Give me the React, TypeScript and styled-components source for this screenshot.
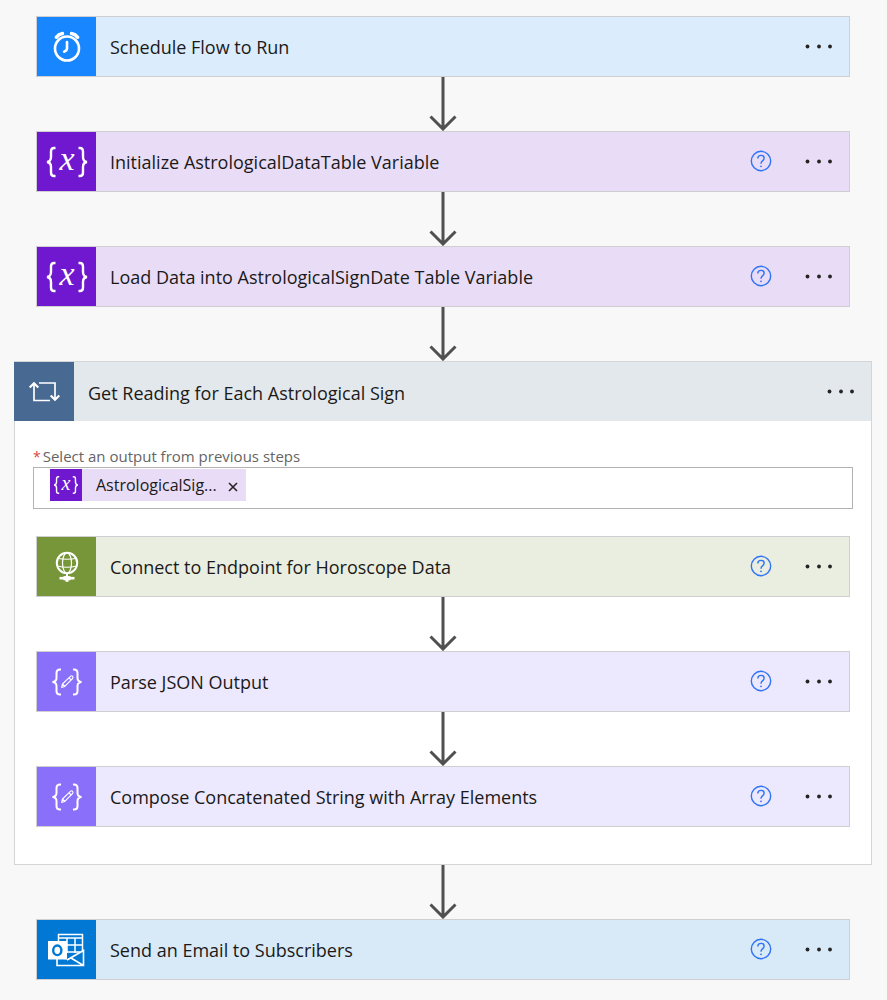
import React from 'react';
import styled, { createGlobalStyle } from 'styled-components';

const GlobalStyle = createGlobalStyle`
  *, *::before, *::after { box-sizing: border-box; }
  body {
    margin: 0;
    background: #f8f8f8;
    color: #1b1a19;
    font-family: 'Segoe UI', 'Open Sans', 'Noto Sans', sans-serif;
  }
  button, input { font: inherit; color: inherit; }
`;

const Canvas = styled.main`
  display: flex;
  flex-direction: column;
  padding: 16px 15px 19px 14px;
`;

const Steps = styled.div<{ $inset: number }>`
  display: flex;
  flex-direction: column;
  padding: 0 ${({ $inset }) => $inset}px;
`;

const Card = styled.section<{ $tint: string }>`
  display: flex;
  align-items: stretch;
  height: 61px;
  border: 1px solid #cfcfd2;
  background: ${({ $tint }) => $tint};
`;

const Tile = styled.span<{ $color: string }>`
  display: flex;
  flex: none;
  align-items: center;
  justify-content: center;
  width: 59px;
  background: ${({ $color }) => $color};
`;

const Title = styled.h2`
  flex: 1;
  min-width: 0;
  margin: 0;
  padding: 2px 0 0 14px;
  overflow: hidden;
  font-size: 18px;
  font-weight: 400;
  line-height: 57px;
  text-overflow: ellipsis;
  white-space: nowrap;
`;

const Actions = styled.div`
  display: flex;
  align-items: center;
  gap: 28px;
  padding: 0 11px 0 12px;
`;

const IconButton = styled.button`
  display: flex;
  align-items: center;
  justify-content: center;
  padding: 0;
  border: 0;
  background: none;
  cursor: pointer;
`;

const HelpButton = styled(IconButton)`
  padding-bottom: 2px;
`;

const Connector = styled.div`
  display: flex;
  justify-content: center;
  height: 54px;
`;

const Group = styled.section`
  border: 1px solid #d4d5d7;
  background: #fff;
`;

const GroupHeader = styled.header`
  display: flex;
  height: 59px;
  background: #e3e8ec;
`;

const GroupTile = styled(Tile)`
  width: 60px;
  margin-left: -1px;
`;

const GroupTitle = styled(Title)`
  padding-top: 3px;
`;

const GroupBody = styled.div`
  padding: 25px 0 37px;
`;

const Field = styled.div`
  display: flex;
  flex-direction: column;
  padding: 0 18px;
  margin-bottom: 27px;
`;

const Label = styled.label`
  color: #666463;
  font-size: 15px;
  line-height: 20px;
`;

const Required = styled.span`
  margin-right: 2px;
  color: #e0443a;
  font-size: 14px;
`;

const TokenBox = styled.div`
  display: flex;
  align-items: flex-start;
  height: 42px;
  padding: 1px 16px;
  border: 1px solid #b3b2b1;
  background: #fff;
`;

const TokenInput = styled.input`
  flex: 1;
  min-width: 0;
  height: 32px;
  border: 0;
  outline: 0;
  background: none;
  font-size: 16px;
`;

const Token = styled.span`
  display: flex;
  flex: none;
  height: 32px;
  background: #e9dcf6;
`;

const TokenTile = styled.span`
  display: flex;
  align-items: center;
  justify-content: center;
  width: 32px;
  background: #7018cf;
`;

const TokenText = styled.span`
  padding-left: 14px;
  font-size: 16px;
  line-height: 32px;
`;

const TokenRemove = styled(IconButton)`
  width: 26px;
  margin-left: 3px;
  padding-top: 4px;
`;

const ClockIcon = () => (
  <svg width="32" height="36" viewBox="0 0 32 36" fill="none" stroke="#fff" strokeLinecap="round" aria-hidden="true">
    <circle cx="16" cy="19.500" r="12" strokeWidth="2.600" />
    <path d="M16 13V19.500Q16 21.300 13.200 22.700" strokeWidth="2.600" />
    <path d="M5.400 8.200Q7.600 5.200 11.400 4.500M26.600 8.200Q24.400 5.200 20.600 4.500" strokeWidth="3.600" />
  </svg>
);

const VariableIcon = ({ width, height }: { width: number; height: number }) => (
  <svg width={width} height={height} viewBox="0 0 44 44" fill="none" aria-hidden="true">
    <path
      d="M10.500 8H9Q6 8 6 11.500V17Q6 21.500 2 22Q6 22.500 6 27V32.500Q6 36 9 36H10.500M33.500 8H35Q38 8 38 11.500V17Q38 21.500 42 22Q38 22.500 38 27V32.500Q38 36 35 36H33.500"
      stroke="#fff"
      strokeWidth="2.400"
    />
    <text x="22" y="30" textAnchor="middle" fill="#fff" fontFamily="'Liberation Serif', serif" fontStyle="italic" fontSize="34">
      x
    </text>
  </svg>
);

const LoopIcon = () => (
  <svg width="32" height="24" viewBox="0 0 32 24" fill="none" stroke="#fff" strokeWidth="1.700" aria-hidden="true">
    <path d="M6 4V20.500H22M11 3H27V19" />
    <path d="M1.700 7.500L6 3.300L10.300 7.500M22.700 15.500L27 19.700L31.300 15.500" strokeWidth="2.200" />
  </svg>
);

const GlobeIcon = () => (
  <svg width="24" height="32" viewBox="0 0 24 32" fill="none" stroke="#fff" aria-hidden="true">
    <circle cx="12" cy="12" r="10.200" strokeWidth="2" />
    <ellipse cx="12" cy="12" rx="4.500" ry="10.200" strokeWidth="1.200" />
    <path d="M3 7.500Q12 9 21 7.500M2.500 15Q12 17.500 21.500 15" strokeWidth="1.200" />
    <path d="M12 22V26" strokeWidth="2" />
    <path d="M4.500 27.200H19.500" strokeWidth="2.600" />
    <path d="M8.500 27.200H15.500" strokeWidth="4.200" />
    <path d="M10.500 29.800H13.500" strokeWidth="2" />
  </svg>
);

const DataIcon = () => (
  <svg width="32" height="28" viewBox="0 0 32 28" fill="none" stroke="#fff" aria-hidden="true">
    <path
      d="M10 1.500H9Q5.500 1.500 5.500 5V10Q5.500 13.500 1.500 14Q5.500 14.500 5.500 18V23Q5.500 26.500 9 26.500H10M22 1.500H23Q26.500 1.500 26.500 5V10Q26.500 13.500 30.500 14Q26.500 14.500 26.500 18V23Q26.500 26.500 23 26.500H22"
      strokeWidth="2"
    />
    <path
      d="M10.600 19.400L11.500 16L19.400 8.300Q20.600 7.300 21.600 8.300Q22.600 9.300 21.600 10.500L13.800 18.400ZM11.500 16L13.800 18.400M18 9.800L20.200 12"
      strokeWidth="1.100"
      strokeLinejoin="round"
    />
  </svg>
);

const OutlookIcon = () => (
  <svg width="40" height="36" viewBox="0 0 40 36" fill="none" aria-hidden="true">
    <path d="M11.500 9V2.500H35.500V19M11.500 6H35.500M20 6V21M28 6V21M19 13H35.500M19 20H33" stroke="#fff" strokeWidth="1.500" />
    <path d="M10 26V33.500H36.500V18.500L20 28M10 25.500L19 26.500M24 26L36.500 33.500" stroke="#fff" strokeWidth="1.600" />
    <rect x="1" y="9" width="19" height="18.500" fill="#fff" />
    <ellipse cx="10.300" cy="18.300" rx="4.100" ry="4.800" stroke="#0078d4" strokeWidth="2.400" />
  </svg>
);

const HelpIcon = () => (
  <svg width="22" height="22" viewBox="0 0 22 22" fill="none" stroke="#2f73f6" aria-hidden="true">
    <circle cx="11" cy="11" r="9.700" strokeWidth="1.400" />
    <path d="M7.800 8.500Q7.900 5.400 11 5.400Q14.100 5.400 14.100 8.200Q14.100 9.700 12.500 10.900Q11 12 11 13.800" strokeWidth="1.400" />
    <circle cx="11" cy="16.300" r="0.900" fill="#2f73f6" stroke="none" />
  </svg>
);

const DotsIcon = () => (
  <svg width="38" height="24" viewBox="0 0 38 24" fill="#252423" aria-hidden="true">
    <circle cx="7.500" cy="11.500" r="1.900" />
    <circle cx="19" cy="11.500" r="1.900" />
    <circle cx="30" cy="11.500" r="1.900" />
  </svg>
);

const CloseIcon = () => (
  <svg width="10" height="10" viewBox="0 0 10 10" stroke="#252423" strokeWidth="1.600" aria-hidden="true">
    <path d="M1 1L9 9M9 1L1 9" />
  </svg>
);

const Arrow = () => (
  <Connector>
    <svg width="30" height="54" viewBox="0 0 30 54" fill="none" stroke="#505050" strokeWidth="3" aria-hidden="true">
      <path d="M15 0V52M2.500 39.500L15 52L27.500 39.500" />
    </svg>
  </Connector>
);

const kinds = {
  schedule: { color: '#1886ff', tint: '#dbecfd', icon: <ClockIcon /> },
  variable: { color: '#7018cf', tint: '#e9dcf6', icon: <VariableIcon width={44} height={44} /> },
  http: { color: '#769639', tint: '#eaeee0', icon: <GlobeIcon /> },
  data: { color: '#8a6ffb', tint: '#ece8fe', icon: <DataIcon /> },
  outlook: { color: '#0078d4', tint: '#d8e9f8', icon: <OutlookIcon /> },
};

const MoreButton = ({ title }: { title: string }) => (
  <IconButton type="button" aria-label={`More commands for ${title}`}>
    <DotsIcon />
  </IconButton>
);

type StepProps = { kind: keyof typeof kinds; title: string; help?: boolean };

const Step = ({ kind, title, help = true }: StepProps) => {
  const { color, tint, icon } = kinds[kind];
  return (
    <Card $tint={tint}>
      <Tile $color={color}>{icon}</Tile>
      <Title>{title}</Title>
      <Actions>
        {help && (
          <HelpButton type="button" aria-label={`Help for ${title}`}>
            <HelpIcon />
          </HelpButton>
        )}
        <MoreButton title={title} />
      </Actions>
    </Card>
  );
};

export default function App() {
  return (
    <>
      <GlobalStyle />
      <Canvas>
        <Steps $inset={22}>
          <Step kind="schedule" title="Schedule Flow to Run" help={false} />
          <Arrow />
          <Step kind="variable" title="Initialize AstrologicalDataTable Variable" />
          <Arrow />
          <Step kind="variable" title="Load Data into AstrologicalSignDate Table Variable" />
          <Arrow />
        </Steps>
        <Group>
          <GroupHeader>
            <GroupTile $color="#486991">
              <LoopIcon />
            </GroupTile>
            <GroupTitle>Get Reading for Each Astrological Sign</GroupTitle>
            <Actions>
              <MoreButton title="Get Reading for Each Astrological Sign" />
            </Actions>
          </GroupHeader>
          <GroupBody>
            <Field>
              <Label htmlFor="loop-source">
                <Required>*</Required>
                Select an output from previous steps
              </Label>
              <TokenBox>
                <Token>
                  <TokenTile>
                    <VariableIcon width={26} height={26} />
                  </TokenTile>
                  <TokenText>AstrologicalSig...</TokenText>
                  <TokenRemove type="button" aria-label="Remove AstrologicalSig...">
                    <CloseIcon />
                  </TokenRemove>
                </Token>
                <TokenInput id="loop-source" type="text" />
              </TokenBox>
            </Field>
            <Steps $inset={21}>
              <Step kind="http" title="Connect to Endpoint for Horoscope Data" />
              <Arrow />
              <Step kind="data" title="Parse JSON Output" />
              <Arrow />
              <Step kind="data" title="Compose Concatenated String with Array Elements" />
            </Steps>
          </GroupBody>
        </Group>
        <Steps $inset={22}>
          <Arrow />
          <Step kind="outlook" title="Send an Email to Subscribers" />
        </Steps>
      </Canvas>
    </>
  );
}
